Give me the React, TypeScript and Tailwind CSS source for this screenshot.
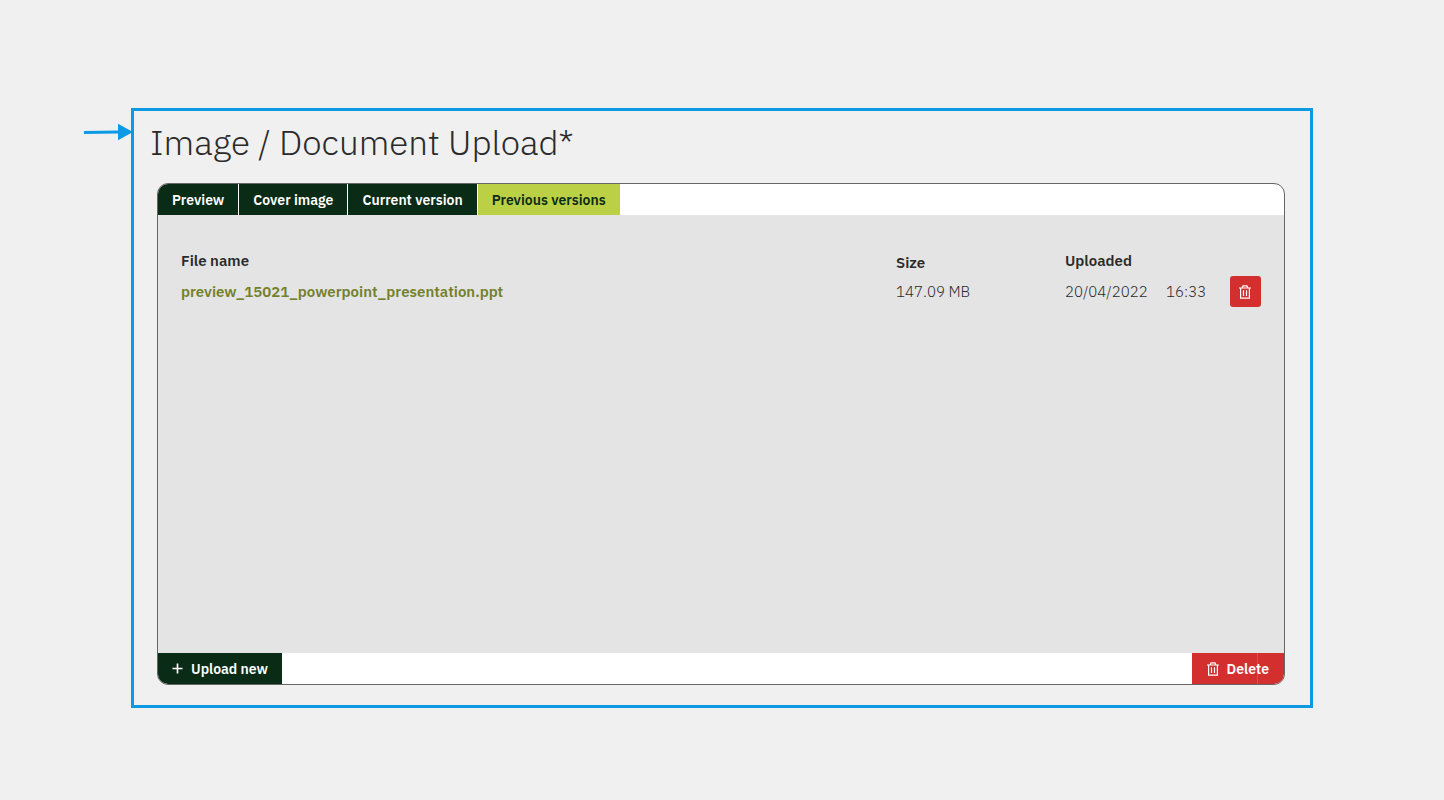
import { useState } from 'react'
import clsx from 'clsx'

const tabs = ['Preview', 'Cover image', 'Current version', 'Previous versions']

const files = [
  {
    name: 'preview_15021_powerpoint_presentation.ppt',
    size: '147.09 MB',
    date: '20/04/2022',
    time: '16:33',
  },
]

function TrashIcon({ className }: { className?: string }) {
  return (
    <svg viewBox="0 0 12 14" fill="none" stroke="currentColor" strokeWidth="1.2" className={className} aria-hidden="true">
      <path d="M0 3h12M3.2 2.8l0.8-2h4l0.8 2M1.6 3.4v9.8h8.8V3.4M4.5 5.2v5.8M7.5 5.2v5.8" />
    </svg>
  )
}

function PlusIcon({ className }: { className?: string }) {
  return (
    <svg viewBox="0 0 12 12" stroke="currentColor" strokeWidth="1.8" className={className} aria-hidden="true">
      <path d="M6 0.5v11M0.5 6h11" />
    </svg>
  )
}

// Pointer that sits outside the frame and touches its left edge
function Pointer() {
  return (
    <svg viewBox="0 0 50 18" className="absolute top-[12px] left-[-50px] h-[18px] w-[50px]" fill="#0c9be3" aria-hidden="true">
      <path d="M0 8.1L34 7.6V0.8L49 9L34 17.2V10.4L0 11z" />
    </svg>
  )
}

export default function App() {
  const [activeTab, setActiveTab] = useState('Previous versions')

  return (
    <div className="min-h-screen bg-[#f0f0f0] px-[131px] py-[108px] font-['IBM_Plex_Sans','Noto_Sans',sans-serif] text-[#2b2b2b]">
      <main className="relative border-3 border-[#0c9be3] pt-[7px] pr-[25px] pb-5 pl-[23px]">
        <Pointer />
        <h1 className="-ml-[7px] pb-[17px] text-[35px] leading-[48px] font-light">Image / Document Upload*</h1>

        <section className="overflow-hidden rounded-[11px] border border-[#666] bg-white">
          <div role="tablist" className="flex h-[31px] gap-px">
            {tabs.map((tab) => (
              <button
                key={tab}
                type="button"
                role="tab"
                aria-selected={tab === activeTab}
                onClick={() => setActiveTab(tab)}
                className={clsx(
                  'px-[14px] text-sm font-semibold',
                  tab === activeTab ? 'bg-[#bcd045] text-[#0a2c17]' : 'bg-[#0a2c17] text-white'
                )}
              >
                {tab}
              </button>
            ))}
          </div>

          <div className="min-h-[438px] bg-[#e4e4e4] px-[23px] pt-9">
            <table className="w-full table-fixed text-left text-[15px] leading-5">
              <colgroup>
                <col />
                <col className="w-[169px]" />
                <col className="w-[101px]" />
                <col className="w-[64px]" />
                <col className="w-[31px]" />
              </colgroup>
              <thead>
                <tr className="h-[25px] align-top">
                  <th className="font-semibold" scope="col">File name</th>
                  <th className="pt-0.5 font-semibold" scope="col">Size</th>
                  <th className="font-semibold" scope="col" colSpan={3}>Uploaded</th>
                </tr>
              </thead>
              <tbody>
                {files.map((file) => (
                  <tr key={file.name} className="h-[31px]">
                    <td>
                      <a href="#" className="font-semibold text-[#72812b]">{file.name}</a>
                    </td>
                    <td className="font-light">{file.size}</td>
                    <td className="font-light">{file.date}</td>
                    <td className="font-light">{file.time}</td>
                    <td>
                      <button
                        type="button"
                        aria-label={`Delete ${file.name}`}
                        className="flex size-[31px] items-center justify-center rounded-[3px] bg-[#d32f2f] text-white"
                      >
                        <TrashIcon className="h-[14px] w-3" />
                      </button>
                    </td>
                  </tr>
                ))}
              </tbody>
            </table>
          </div>

          <div className="flex h-[31px] justify-between text-sm font-semibold text-white">
            <button type="button" className="flex items-center gap-2 bg-[#0a2c17] px-[14px]">
              <PlusIcon className="size-[11px]" />
              Upload new
            </button>
            <button type="button" className="relative flex items-center gap-2 bg-[#d32f2f] px-[15px]">
              <TrashIcon className="h-[14px] w-3" />
              Delete
              <span className="absolute inset-y-0 right-[26px] w-px bg-white/15" />
            </button>
          </div>
        </section>
      </main>
    </div>
  )
}
